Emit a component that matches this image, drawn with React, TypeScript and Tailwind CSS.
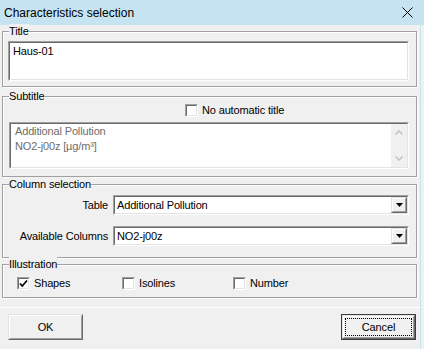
import type { ReactNode } from "react";

function Sunken({ className = "", children }: { className?: string; children?: ReactNode }) {
  return (
    <div className={`border border-t-[#a0a0a0] border-l-[#a0a0a0] border-r-white border-b-white ${className}`}>
      <div className="flex h-full border border-t-[#696969] border-l-[#696969] border-r-[#e3e3e3] border-b-[#e3e3e3] bg-white">
        {children}
      </div>
    </div>
  );
}

function Raised({ className = "", children }: { className?: string; children?: ReactNode }) {
  return (
    <div className={`border border-t-[#e3e3e3] border-l-[#e3e3e3] border-r-[#696969] border-b-[#696969] bg-[#f0f0f0] ${className}`}>
      <div className="flex h-full items-center justify-center border border-t-white border-l-white border-r-[#a0a0a0] border-b-[#a0a0a0]">
        {children}
      </div>
    </div>
  );
}

function Group({ label, className = "", children }: { label: string; className?: string; children?: ReactNode }) {
  return (
    <div className={`relative ml-[2px] w-[415px] border border-[#a0a0a0] shadow-[inset_1px_1px_0_#fff,1px_1px_0_#fff] ${className}`}>
      <span className="absolute -top-[8px] left-[6px] bg-[#f0f0f0] leading-[14px]">{label}</span>
      {children}
    </div>
  );
}

function CheckBox({ checked = false }: { checked?: boolean }) {
  return (
    <div className="h-[13px] w-[13px] shrink-0 border border-t-[#a0a0a0] border-l-[#a0a0a0] border-r-white border-b-white">
      <div className="flex h-full items-center justify-center border border-t-[#696969] border-l-[#696969] border-r-[#e3e3e3] border-b-[#e3e3e3] bg-white">
        {checked && (
          <svg width="9" height="9" viewBox="0 0 9 9">
            <path d="M1 4.5 L3.3 7 L8 1.5" fill="none" stroke="#000" strokeWidth="1.8" />
          </svg>
        )}
      </div>
    </div>
  );
}

function Combo({ value }: { value: string }) {
  return (
    <Sunken className="h-[20px] flex-1">
      <div className="flex flex-1 items-center pl-[2px] leading-[14px]">{value}</div>
      <Raised className="h-full w-[16px]">
        <svg width="7" height="4" viewBox="0 0 7 4">
          <path d="M0 0 H7 L3.5 4 Z" fill="#000" />
        </svg>
      </Raised>
    </Sunken>
  );
}

function Chevron({ up }: { up?: boolean }) {
  return (
    <svg width="8" height="5" viewBox="0 0 8 5">
      <path d={up ? "M0.5 4.5 L4 1 L7.5 4.5" : "M0.5 0.5 L4 4 L7.5 0.5"} fill="none" stroke="#c2c2c2" strokeWidth="1.5" />
    </svg>
  );
}

export default function App() {
  return (
    <div className="flex h-[349px] w-[424px] flex-col overflow-hidden bg-[#f0f0f0] font-['Liberation_Sans',Arial,sans-serif] text-[11px] tracking-[-0.15px] text-black">
      <div className="flex h-[25px] shrink-0 items-center justify-between bg-[#c5e3f0] pl-[4px] pr-[11px] text-[12px] tracking-normal">
        <span>Characteristics selection</span>
        <svg width="11" height="11" viewBox="0 0 11 11">
          <path d="M0.5 0.5 L10.5 10.5 M10.5 0.5 L0.5 10.5" stroke="#000" strokeWidth="1" />
        </svg>
      </div>

      <div className="flex flex-1">
        <div className="w-[420px]">
          <Group label="Title" className="mt-[6px] h-[56px]">
            <Sunken className="ml-[5px] mt-[9px] h-[40px] w-[401px]">
              <div className="pl-[3px] pt-[2px] leading-[13px]">Haus-01</div>
            </Sunken>
          </Group>

          <Group label="Subtitle" className="mt-[9px] h-[81px]">
            <div className="ml-[182px] mt-[7px] flex h-[13px] items-center gap-[4px]">
              <CheckBox />
              <span>No automatic title</span>
            </div>
            <Sunken className="ml-[6px] mt-[5px] h-[47px] w-[400px]">
              <div className="flex-1 pl-[4px] leading-[15px] text-[#6d6d6d]">
                <div>Additional Pollution</div>
                <div>NO2-j00z [µg/m³]</div>
              </div>
              <div className="flex w-[16px] flex-col justify-between bg-[#f0f0f0]">
                <div className="flex h-[17px] items-center justify-center">
                  <Chevron up />
                </div>
                <div className="flex h-[17px] items-center justify-center">
                  <Chevron />
                </div>
              </div>
            </Sunken>
          </Group>

          <Group label="Column selection" className="mt-[7px] h-[74px]">
            <div className="flex flex-col gap-[11px] pr-[7px] pt-[10px]">
              <div className="flex h-[20px] items-center">
                <span className="w-[105px] shrink-0 text-right">Table</span>
                <div className="ml-[5px] flex flex-1">
                  <Combo value="Additional Pollution" />
                </div>
              </div>
              <div className="flex h-[20px] items-center">
                <span className="w-[105px] shrink-0 text-right">Available Columns</span>
                <div className="ml-[5px] flex flex-1">
                  <Combo value="NO2-j00z" />
                </div>
              </div>
            </div>
          </Group>

          <Group label="Illustration" className="mt-[6px] h-[34px]">
            <div className="ml-[14px] mt-[12px] flex h-[13px] items-center">
              <div className="flex w-[105px] items-center gap-[4px]">
                <CheckBox checked />
                <span>Shapes</span>
              </div>
              <div className="flex w-[111px] items-center gap-[4px]">
                <CheckBox />
                <span>Isolines</span>
              </div>
              <div className="flex items-center gap-[4px]">
                <CheckBox />
                <span>Number</span>
              </div>
            </div>
          </Group>

          <div className="mt-[9px] flex justify-between border-t border-white pl-[8px] pr-[4px] pt-[6px]">
            <Raised className="h-[26px] w-[75px]">OK</Raised>
            <div className="h-[26px] w-[75px] border border-[#3c3c3c]">
              <Raised className="h-full w-full">
                <div className="m-[1px] flex h-[calc(100%-2px)] w-[calc(100%-2px)] items-center justify-center border border-dotted border-black">
                  Cancel
                </div>
              </Raised>
            </div>
          </div>
        </div>
        <div className="w-px bg-[#c5e3f0]" />
        <div className="flex-1" />
      </div>
    </div>
  );
}
